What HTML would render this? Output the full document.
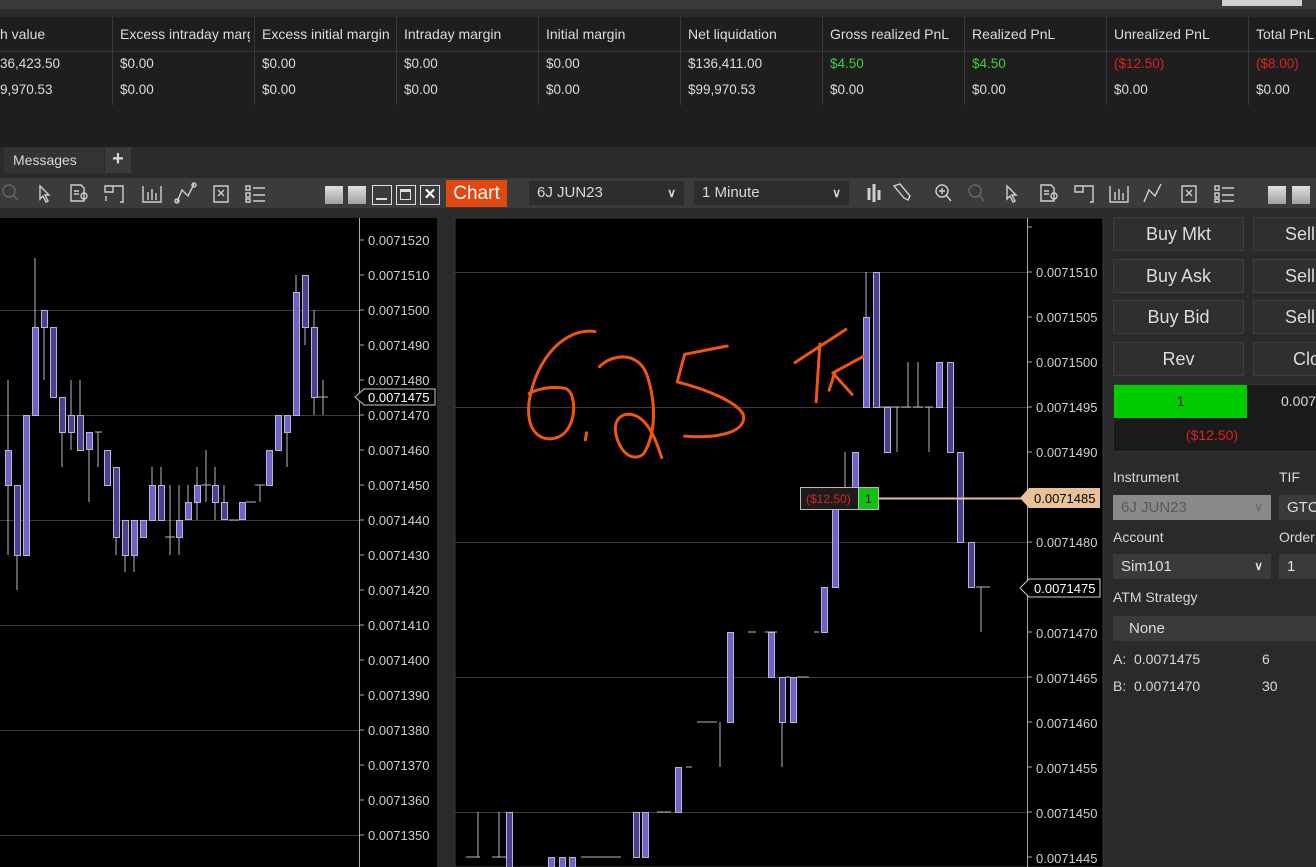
<!DOCTYPE html>
<html><head><meta charset="utf-8"><style>
*{margin:0;padding:0;box-sizing:border-box}
body{width:1316px;height:867px;overflow:hidden;background:#2a2a2c;font-family:"Liberation Sans",sans-serif;color:#d8d8d8;position:relative}
.a{position:absolute}
.th{position:absolute;top:26px;font-size:14px;color:#dcdcdc;white-space:nowrap;overflow:hidden}
.td{position:absolute;font-size:13.5px;color:#dcdcdc;white-space:nowrap}
.btn{position:absolute;background:#2f2f31;border:1px solid #3e3e40;color:#dcdcdc;font-size:18px;text-align:center;line-height:32px;overflow:hidden;white-space:nowrap}
.lbl{position:absolute;font-size:14px;color:#d8d8d8}
.sel{position:absolute;background:#3a3a3d;font-size:15px;color:#ddd;padding-left:8px;line-height:25px}
</style></head><body>
<!-- top bar -->
<div class="a" style="left:0;top:0;width:1316px;height:9px;background:#3a3a3c"></div>
<div class="a" style="left:0;top:9px;width:1316px;height:8px;background:#2a2a2c"></div>
<div class="a" style="left:1222px;top:0;width:80px;height:6px;background:#d0d0d0"></div>
<!-- table -->
<div class="a" style="left:0;top:17px;width:1316px;height:130px;background:#1e1e1f"></div>
<div class="a" style="left:0;top:51px;width:1316px;height:1px;background:#3a3a3c"></div>
<div class="a" style="left:112px;top:17px;width:1px;height:88px;background:#3a3a3c"></div>
<div class="a" style="left:254px;top:17px;width:1px;height:88px;background:#3a3a3c"></div>
<div class="a" style="left:396px;top:17px;width:1px;height:88px;background:#3a3a3c"></div>
<div class="a" style="left:538px;top:17px;width:1px;height:88px;background:#3a3a3c"></div>
<div class="a" style="left:680px;top:17px;width:1px;height:88px;background:#3a3a3c"></div>
<div class="a" style="left:822px;top:17px;width:1px;height:88px;background:#3a3a3c"></div>
<div class="a" style="left:964px;top:17px;width:1px;height:88px;background:#3a3a3c"></div>
<div class="a" style="left:1106px;top:17px;width:1px;height:88px;background:#3a3a3c"></div>
<div class="a" style="left:1248px;top:17px;width:1px;height:88px;background:#3a3a3c"></div>
<div class="th" style="left:0">h value</div>
<div class="th" style="left:120px;width:130px">Excess intraday margin</div>
<div class="th" style="left:262px;width:130px">Excess initial margin</div>
<div class="th" style="left:404px">Intraday margin</div>
<div class="th" style="left:546px">Initial margin</div>
<div class="th" style="left:688px">Net liquidation</div>
<div class="th" style="left:830px">Gross realized PnL</div>
<div class="th" style="left:972px">Realized PnL</div>
<div class="th" style="left:1114px">Unrealized PnL</div>
<div class="th" style="left:1256px">Total PnL</div>
<div class="td" style="left:0;top:56px">36,423.50</div>
<div class="td" style="left:0;top:82px">9,970.53</div>
<div class="td" style="left:120px;top:56px">$0.00</div><div class="td" style="left:120px;top:82px">$0.00</div>
<div class="td" style="left:262px;top:56px">$0.00</div><div class="td" style="left:262px;top:82px">$0.00</div>
<div class="td" style="left:404px;top:56px">$0.00</div><div class="td" style="left:404px;top:82px">$0.00</div>
<div class="td" style="left:546px;top:56px">$0.00</div><div class="td" style="left:546px;top:82px">$0.00</div>
<div class="td" style="left:688px;top:56px">$136,411.00</div><div class="td" style="left:688px;top:82px">$99,970.53</div>
<div class="td" style="left:830px;top:56px;color:#3ccf3c">$4.50</div><div class="td" style="left:830px;top:82px">$0.00</div>
<div class="td" style="left:972px;top:56px;color:#3ccf3c">$4.50</div><div class="td" style="left:972px;top:82px">$0.00</div>
<div class="td" style="left:1114px;top:56px;color:#e02020">($12.50)</div><div class="td" style="left:1114px;top:82px">$0.00</div>
<div class="td" style="left:1256px;top:56px;color:#e02020">($8.00)</div><div class="td" style="left:1256px;top:82px">$0.00</div>
<!-- tabs -->
<div class="a" style="left:0;top:147px;width:1316px;height:28px;background:#2b2b2d"></div>
<div class="a" style="left:4px;top:147px;width:100px;height:26px;background:#333336;font-size:14px;line-height:26px;padding-left:9px">Messages</div>
<div class="a" style="left:105px;top:147px;width:26px;height:26px;background:#3a3a3d;font-size:20px;line-height:25px;text-align:center;font-weight:bold">+</div>
<!-- toolbar -->
<div class="a" style="left:0;top:178px;width:1316px;height:30px;background:#3b3b3e"></div>
<svg class="a" style="left:0;top:178px" width="1316" height="30" fill="none" stroke="#cfcfcf" stroke-width="1.4">
<circle cx="9" cy="13" r="6" stroke="#666"/><path d="M13 17l5 5" stroke="#666"/>
<path d="M40 8l0 13 3-3 3 6 2-1-3-6 4 0z"/>
<path d="M71 7h10l3 3v13H71zM74 13h5M74 16h5"/><circle cx="84" cy="18" r="3"/>
<path d="M105 8h8v6h-8zM113 8h10v16h-3M106 18v5"/>
<path d="M143 8v16h18V8M148 14v8M152 11v11M156 15v7"/>
<path d="M177 24l5-12 6 6 6-12"/><circle cx="177" cy="23" r="2"/><circle cx="194" cy="7" r="2"/>
<path d="M214 8h14v16h-14zM218 12l6 6M224 12l-6 6"/>
<path d="M246 8h4v4h-4zM246 15h4v4h-4zM246 21h4v3h-4zM253 10h12M253 17h12M253 23h12"/>
</svg>
<div class="a" style="left:325px;top:186px;width:18px;height:18px;background:linear-gradient(#e0e0e0,#a0a0a0)"></div>
<div class="a" style="left:348px;top:186px;width:18px;height:18px;background:linear-gradient(#e0e0e0,#a0a0a0)"></div>
<div class="a" style="left:372px;top:185px;width:20px;height:20px;border:1.5px solid #ddd"><div class="a" style="left:3px;top:12px;width:11px;height:2px;background:#ddd"></div></div>
<div class="a" style="left:396px;top:185px;width:20px;height:20px;border:1.5px solid #ddd"><div class="a" style="left:3px;top:3px;width:11px;height:11px;border:1.5px solid #ddd;border-top-width:3px"></div></div>
<div class="a" style="left:420px;top:185px;width:20px;height:20px;border:1.5px solid #ddd;color:#fff;font-size:15px;line-height:17px;text-align:center;font-weight:bold">✕</div>
<div class="a" style="left:446px;top:180px;width:61px;height:27px;background:#e2470f;color:#fff;font-size:19px;line-height:27px;text-align:center">Chart</div>
<div class="a" style="left:529px;top:181px;width:155px;height:24px;background:#2d2d30;font-size:15px;line-height:24px;padding-left:8px">6J JUN23<span style="position:absolute;right:8px;font-size:12px;font-weight:bold">∨</span></div>
<div class="a" style="left:694px;top:181px;width:155px;height:24px;background:#2d2d30;font-size:15px;line-height:24px;padding-left:8px">1 Minute<span style="position:absolute;right:8px;font-size:12px;font-weight:bold">∨</span></div>
<svg class="a" style="left:860px;top:178px" width="456" height="30" fill="none" stroke="#d0d0d0" stroke-width="1.4">
<path d="M9 10v12M14 6v18M19 12v10" stroke-width="3"/>
<path d="M40 6l10 12-2 4-4-2-10-12z"/>
<circle cx="82" cy="13" r="6"/><path d="M86 17l5 6M79 13h6M82 10v6"/>
<circle cx="115" cy="13" r="6" stroke="#666"/><path d="M119 17l5 6" stroke="#666"/>
<path d="M147 8l0 13 3-3 3 6 2-1-3-6 4 0z"/>
<path d="M181 7h10l3 3v13H181zM184 13h5M184 16h5"/><circle cx="194" cy="18" r="3"/>
<path d="M215 8h8v6h-8zM223 8h10v16h-3"/>
<path d="M250 8v16h18V8M255 14v8M259 11v11M263 15v7"/>
<path d="M284 24l5-12 6 6 6-12"/>
<path d="M322 8h14v16h-14zM326 12l6 6M332 12l-6 6"/>
<path d="M355 8h4v4h-4zM355 15h4v4h-4zM355 21h4v3h-4zM362 10h12M362 17h12M362 23h12"/>
</svg>
<div class="a" style="left:1268px;top:186px;width:18px;height:18px;background:linear-gradient(#e0e0e0,#a0a0a0)"></div>
<div class="a" style="left:1292px;top:186px;width:18px;height:18px;background:linear-gradient(#e0e0e0,#a0a0a0)"></div>

<!-- LEFT CHART -->
<svg class="a" style="left:0;top:208px" width="445" height="659">
<rect x="0" y="10" width="437" height="649" fill="#000"/>
<rect x="437" y="0" width="8" height="659" fill="#2a2a2c"/>
<g transform="translate(0,-208)">
<g stroke="#3c3c3c" stroke-width="1"><path d="M0 310.5H359M0 415.5H359M0 520.5H359M0 625.5H359M0 730.5H359M0 835.5H359"/></g>
<path d="M359.5 218V867" stroke="#aaa"/>
<g stroke="#aaa"><path d="M359 240h5M359 275h5M359 310h5M359 345h5M359 380h5M359 415h5M359 450h5M359 485h5M359 520h5M359 555h5M359 590h5M359 625h5M359 660h5M359 695h5M359 730h5M359 765h5M359 800h5M359 835h5"/></g>
<g font-size="13" fill="#d0d0d0" font-family="Liberation Sans">
<text x="368" y="245">0.0071520</text><text x="368" y="280">0.0071510</text><text x="368" y="315">0.0071500</text><text x="368" y="350">0.0071490</text><text x="368" y="385">0.0071480</text><text x="368" y="420">0.0071470</text><text x="368" y="455">0.0071460</text><text x="368" y="490">0.0071450</text><text x="368" y="525">0.0071440</text><text x="368" y="560">0.0071430</text><text x="368" y="595">0.0071420</text><text x="368" y="630">0.0071410</text><text x="368" y="665">0.0071400</text><text x="368" y="700">0.0071390</text><text x="368" y="735">0.0071380</text><text x="368" y="770">0.0071370</text><text x="368" y="805">0.0071360</text><text x="368" y="840">0.0071350</text>
</g>
<path d="M364 389h71v16h-71l-9-8z" fill="#000" stroke="#ccc"/>
<text x="368" y="402" font-size="13" fill="#fff" font-family="Liberation Sans">0.0071475</text>
<g id="lc" stroke="#b8b8c8" stroke-width="1">
<!-- wick lines -->
<path d="M8 380V555M17 520V590M35 258V380M44 310V380M53 328V398M62 398V467M71 380V450M80 380V450M89 432V502M98 432V467M107 450V485M116 485V555M125 520V572M134 520V572M143 520V537M152 467V520M161 467V520M170 485V555M179 485V555M188 485V520M197 467V520M206 450V502M215 467V520M224 485V520M233 520V520M251 502V502M260 485V502M287 415V467M296 275V415M305 275V345M314 310V415M323 380V415"/>
<path d="M95 432h7M165 537h10M201 485h10M229 520h10M246 502h10M255 485h10M318 397h10"/>
</g>
<g stroke="#b8b8c8" stroke-width="1">
<rect x="5.5" y="450.5" width="6" height="35" fill="#6f63c9"/>
<rect x="14.5" y="485.5" width="6" height="70" fill="#4b3f94"/>
<rect x="23.5" y="415.5" width="6" height="140" fill="#6f63c9"/>
<rect x="32.5" y="327.5" width="6" height="88" fill="#6f63c9"/>
<rect x="41.5" y="310.5" width="6" height="17" fill="#4b3f94"/>
<rect x="50.5" y="327.5" width="6" height="70" fill="#4b3f94"/>
<rect x="59.5" y="397.5" width="6" height="35" fill="#4b3f94"/>
<rect x="68.5" y="415.5" width="6" height="17" fill="#4b3f94"/>
<rect x="77.5" y="415.5" width="6" height="35" fill="#4b3f94"/>
<rect x="86.5" y="432.5" width="6" height="17" fill="#6f63c9"/>
<rect x="104.5" y="450.5" width="6" height="35" fill="#4b3f94"/>
<rect x="113.5" y="467.5" width="6" height="70" fill="#4b3f94"/>
<rect x="122.5" y="520.5" width="6" height="35" fill="#4b3f94"/>
<rect x="131.5" y="520.5" width="6" height="35" fill="#6f63c9"/>
<rect x="140.5" y="520.5" width="6" height="17" fill="#6f63c9"/>
<rect x="149.5" y="485.5" width="6" height="35" fill="#6f63c9"/>
<rect x="158.5" y="485.5" width="6" height="35" fill="#4b3f94"/>
<rect x="176.5" y="520.5" width="6" height="17" fill="#6f63c9"/>
<rect x="185.5" y="502.5" width="6" height="17" fill="#6f63c9"/>
<rect x="194.5" y="485.5" width="6" height="17" fill="#6f63c9"/>
<rect x="212.5" y="485.5" width="6" height="17" fill="#4b3f94"/>
<rect x="221.5" y="502.5" width="6" height="17" fill="#4b3f94"/>
<rect x="239.5" y="502.5" width="6" height="17" fill="#6f63c9"/>
<rect x="266.5" y="450.5" width="6" height="35" fill="#6f63c9"/>
<rect x="275.5" y="415.5" width="6" height="35" fill="#6f63c9"/>
<rect x="284.5" y="415.5" width="6" height="17" fill="#6f63c9"/>
<rect x="293.5" y="292.5" width="6" height="123" fill="#6f63c9"/>
<rect x="302.5" y="275.5" width="6" height="52" fill="#4b3f94"/>
<rect x="311.5" y="327.5" width="6" height="70" fill="#4b3f94"/>
</g>
</g>
</svg>

<!-- RIGHT CHART -->
<svg class="a" style="left:445px;top:208px" width="660" height="659">
<g transform="translate(-445,-208)">
<rect x="445" y="208" width="660" height="659" fill="#2a2a2c"/>
<rect x="455" y="218" width="648" height="649" fill="#000"/>
<rect x="455" y="218" width="648" height="649" fill="none" stroke="#3a3a3a"/>
<path d="M455 272.5H1027M455 407.5H1027M455 542.5H1027M455 677.5H1027M455 812.5H1027" stroke="#3c3c3c"/>
<path d="M1027.5 218V867" stroke="#aaa"/>
<path d="M1027 227h5M1027 272h5M1027 317h5M1027 362h5M1027 407h5M1027 452h5M1027 497h5M1027 542h5M1027 587h5M1027 632h5M1027 677h5M1027 722h5M1027 767h5M1027 812h5M1027 857h5" stroke="#aaa"/>
<g font-size="13" fill="#d0d0d0" font-family="Liberation Sans">
<text x="1036" y="277">0.0071510</text><text x="1036" y="322">0.0071505</text><text x="1036" y="367">0.0071500</text><text x="1036" y="412">0.0071495</text><text x="1036" y="457">0.0071490</text><text x="1036" y="547">0.0071480</text><text x="1036" y="638">0.0071470</text><text x="1036" y="683">0.0071465</text><text x="1036" y="728">0.0071460</text><text x="1036" y="773">0.0071455</text><text x="1036" y="818">0.0071450</text><text x="1036" y="863">0.0071445</text>
</g>
<path d="M1029 488h71v20h-71l-9-10z" fill="#e9c196"/>
<text x="1034" y="503" font-size="13" fill="#000" font-family="Liberation Sans">0.0071485</text>
<path d="M1029 579h71v18h-71l-9-9z" fill="#000" stroke="#ccc"/>
<text x="1034" y="593" font-size="13" fill="#fff" font-family="Liberation Sans">0.0071475</text>
<g stroke="#b8b8c8" stroke-width="1">
<path d="M478 812V857M499 812V857M720 722V767M782 677V767M845 452V487M866 272V407M897 407V452M908 362V407M918 362V407M929 407V452M981 587V632"/>
<path d="M466 857h14M492 857h14M581 857h40M657 812h14M686 767h6M697 722h20M748 632h8M765 632h12M786 677h4M797 677h8M805 677h4M814 632h5M880 407h20M901 407h10M913 407h10M925 407h8M976 587h14"/>
</g>
<g stroke="#b8b8c8" stroke-width="1">
<rect x="506.5" y="812.5" width="6" height="60" fill="#4b3f94"/>
<rect x="548.5" y="857.5" width="6" height="20" fill="#6f63c9"/>
<rect x="559.5" y="857.5" width="6" height="20" fill="#6f63c9"/>
<rect x="569.5" y="857.5" width="6" height="20" fill="#6f63c9"/>
<rect x="633.5" y="812.5" width="6" height="45" fill="#4b3f94"/>
<rect x="642.5" y="812.5" width="6" height="45" fill="#6f63c9"/>
<rect x="675.5" y="767.5" width="6" height="45" fill="#6f63c9"/>
<rect x="727.5" y="632.5" width="6" height="90" fill="#6f63c9"/>
<rect x="768.5" y="632.5" width="6" height="45" fill="#6f63c9"/>
<rect x="779.5" y="677.5" width="6" height="45" fill="#4b3f94"/>
<rect x="790.5" y="677.5" width="6" height="45" fill="#6f63c9"/>
<rect x="821.5" y="587.5" width="6" height="45" fill="#6f63c9"/>
<rect x="832.5" y="497.5" width="6" height="90" fill="#6f63c9"/>
<rect x="852.5" y="452.5" width="6" height="36" fill="#6f63c9"/>
<rect x="863.5" y="317.5" width="6" height="90" fill="#6f63c9"/>
<rect x="873.5" y="272.5" width="6" height="135" fill="#4b3f94"/>
<rect x="884.5" y="407.5" width="6" height="45" fill="#4b3f94"/>
<rect x="936.5" y="362.5" width="6" height="45" fill="#6f63c9"/>
<rect x="947.5" y="362.5" width="6" height="90" fill="#4b3f94"/>
<rect x="957.5" y="452.5" width="6" height="90" fill="#4b3f94"/>
<rect x="968.5" y="542.5" width="6" height="45" fill="#4b3f94"/>
</g>
<path d="M879 498.5H1022" stroke="#e9c196" stroke-width="2"/>
<rect x="800.5" y="487.5" width="58" height="22" fill="#1c1c1c" stroke="#bbb"/>
<text x="806" y="503" font-size="12" fill="#e02020" font-family="Liberation Sans">($12.50)</text>
<rect x="858.5" y="487.5" width="20" height="22" fill="#0ec20e" stroke="#bbb"/>
<text x="865" y="503" font-size="12" fill="#000" font-family="Liberation Sans">1</text>
<g transform="translate(455,220) scale(0.3704,0.4132)" fill="none" stroke="#f0560f" stroke-width="3" stroke-linecap="round" stroke-linejoin="round">
<path vector-effect="non-scaling-stroke" d="M378 270C300 260 220 330 200 440C190 520 240 540 280 525C330 505 330 420 300 408C260 400 220 410 200 420"/>
<path vector-effect="non-scaling-stroke" d="M355 515L352 532"/>
<path vector-effect="non-scaling-stroke" d="M390 355C430 320 500 320 520 380C545 450 540 520 510 565C480 590 440 560 433 510C430 470 470 460 500 480C530 500 545 540 558 575"/>
<path vector-effect="non-scaling-stroke" d="M735 305L620 325L600 392C680 410 760 440 778 470C790 510 720 530 620 523"/>
<path vector-effect="non-scaling-stroke" d="M918 345L1055 265M985 300L975 440"/>
<path vector-effect="non-scaling-stroke" d="M1025 370L1010 412M1103 330L1020 370L1072 422"/>
</g>
</g>
</svg>

<!-- RIGHT PANEL -->
<div class="a" style="left:1104px;top:208px;width:212px;height:659px;background:#2a2a2c"></div>
<div class="btn" style="left:1113px;top:217px;width:131px;height:34px">Buy Mkt</div>
<div class="btn" style="left:1253px;top:217px;width:70px;height:34px;text-align:left;padding-left:31px">Sell</div>
<div class="btn" style="left:1113px;top:259px;width:131px;height:34px">Buy Ask</div>
<div class="btn" style="left:1253px;top:259px;width:70px;height:34px;text-align:left;padding-left:31px">Sell</div>
<div class="btn" style="left:1113px;top:300px;width:131px;height:34px">Buy Bid</div>
<div class="btn" style="left:1253px;top:300px;width:70px;height:34px;text-align:left;padding-left:31px">Sell</div>
<div class="btn" style="left:1113px;top:342px;width:131px;height:34px">Rev</div>
<div class="btn" style="left:1253px;top:342px;width:70px;height:34px;text-align:left;padding-left:39px">Clo</div>
<div class="a" style="left:1113px;top:384px;width:210px;height:68px;background:#1a1a1b;border:1px solid #333"></div>
<div class="a" style="left:1114px;top:385px;width:133px;height:33px;background:#00cc00;color:#111;font-size:14px;line-height:33px;text-align:center">1</div>
<div class="a" style="left:1281px;top:385px;font-size:14px;line-height:33px;color:#ddd">0.007</div>
<div class="a" style="left:1114px;top:418px;width:210px;height:34px;color:#e02020;font-size:14px;line-height:34px;text-align:center;padding-right:14px">($12.50)</div>
<div class="lbl" style="left:1113px;top:469px">Instrument</div>
<div class="lbl" style="left:1279px;top:469px">TIF</div>
<div class="sel" style="left:1113px;top:495px;width:158px;background:#8a8a8c;color:#5a5a5a">6J JUN23<span style="position:absolute;right:8px;font-size:12px;color:#666">∨</span></div>
<div class="sel" style="left:1279px;top:495px;width:40px">GTC</div>
<div class="lbl" style="left:1113px;top:529px">Account</div>
<div class="lbl" style="left:1279px;top:529px">Order</div>
<div class="sel" style="left:1113px;top:554px;width:158px">Sim101<span style="position:absolute;right:8px;font-size:12px;font-weight:bold">∨</span></div>
<div class="sel" style="left:1279px;top:554px;width:40px">1</div>
<div class="lbl" style="left:1113px;top:589px">ATM Strategy</div>
<div class="sel" style="left:1113px;top:616px;width:210px;padding-left:16px">None</div>
<div class="lbl" style="left:1113px;top:651px">A:&nbsp; 0.0071475</div>
<div class="lbl" style="left:1262px;top:651px">6</div>
<div class="lbl" style="left:1113px;top:678px">B:&nbsp; 0.0071470</div>
<div class="lbl" style="left:1262px;top:678px">30</div>
</body></html>
